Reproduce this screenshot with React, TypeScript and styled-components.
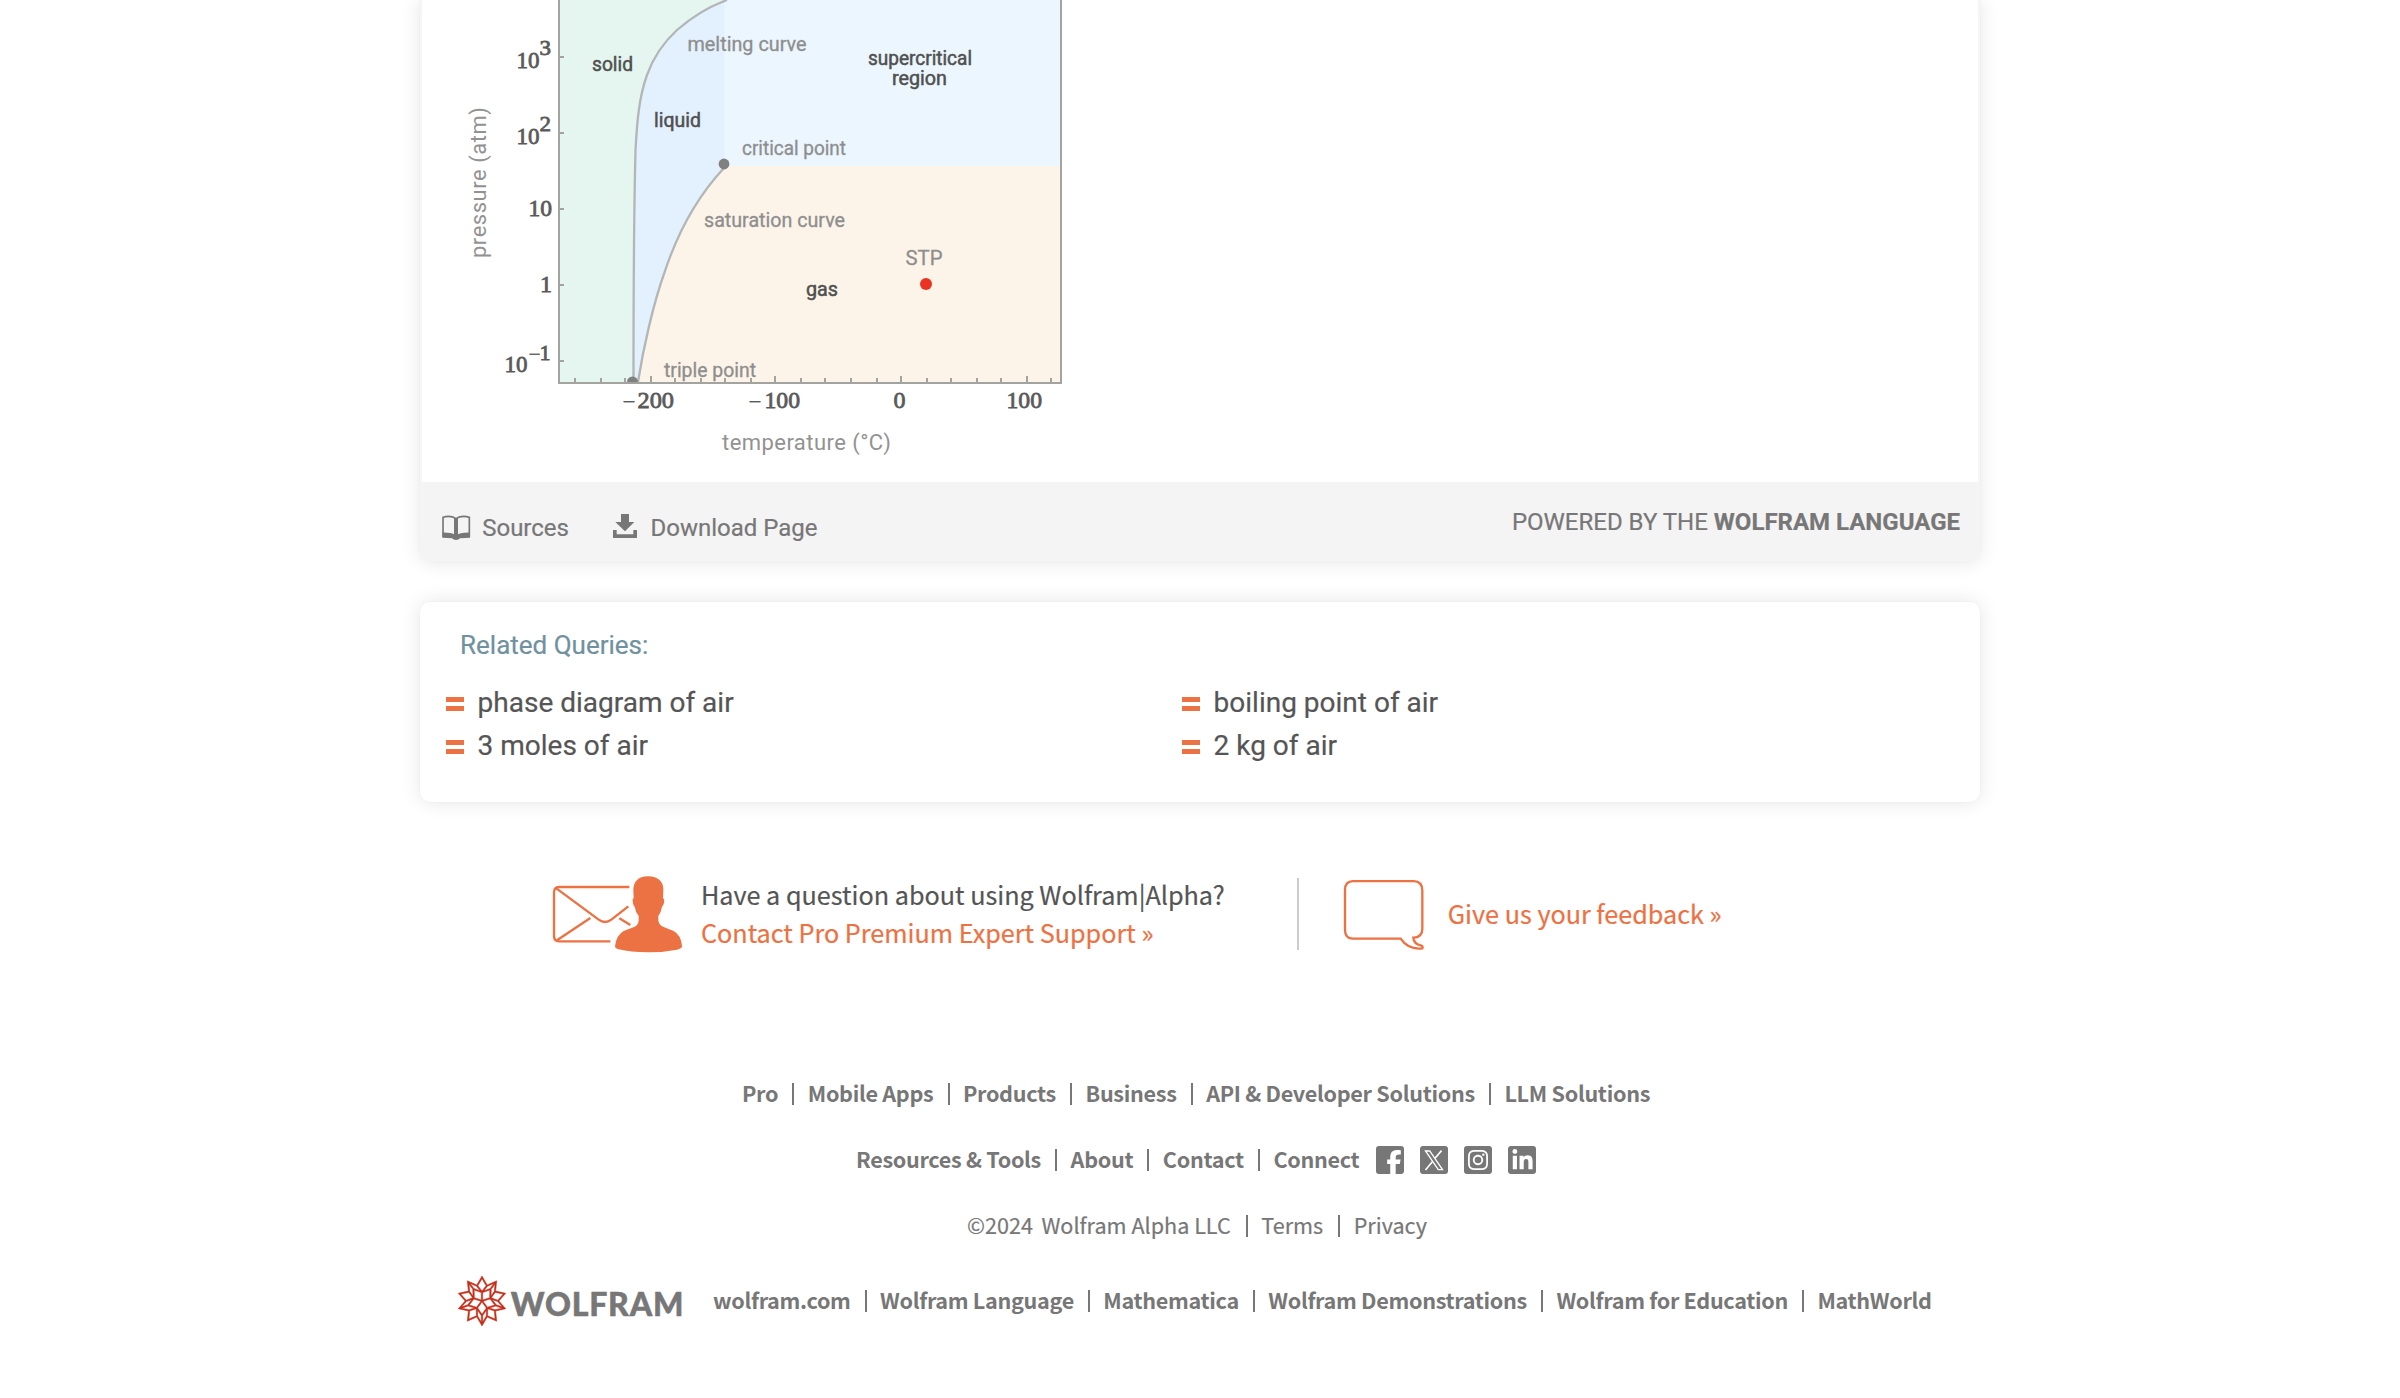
import React, { Fragment } from 'react';
import styled, { createGlobalStyle } from 'styled-components';
import { FaFacebookF, FaLinkedinIn } from 'react-icons/fa6';
import { SiWolfram, SiInstagram } from 'react-icons/si';

const sans = 'Roboto, "Liberation Sans", sans-serif';
const source = '"Noto Sans CJK SC", "Noto Sans", sans-serif';
const serif = '"Liberation Serif", serif';
const orange = '#ec7143';
const gray = '#777';

const GlobalStyle = createGlobalStyle`
  body {
    margin: 0;
    background: #fff;
    overflow: hidden;
  }
`;

const Page = styled.main`
  width: 1560px;
  height: 1398px;
  margin: 0 auto;
  display: flex;
  flex-direction: column;
  font-family: ${sans};
`;

const cardShadow = '0 0 20px rgba(0, 0, 0, 0.1), 0 0 2px rgba(0, 0, 0, 0.05)';

const ResultCard = styled.section`
  border-radius: 0 0 10px 10px;
  overflow: hidden;
  box-shadow: ${cardShadow};
`;

const PodBody = styled.div`
  height: 482px;
  background: #fff;
  border: solid #f5f5f5;
  border-width: 0 2px;
  box-sizing: border-box;
`;

const Chart = styled.svg`
  display: block;
`;

const CardFooter = styled.footer`
  height: 80px;
  padding: 0 20px 0 22px;
  display: flex;
  align-items: center;
  justify-content: space-between;
  background: #f4f4f4;
  color: ${gray};
  font-size: 24px;
  line-height: 28px;
  -webkit-text-stroke: 0.2px;
`;

const Actions = styled.div`
  display: flex;
  gap: 44px;
  padding-top: 12px;
`;

const Action = styled.a<{ $gap: number }>`
  display: flex;
  align-items: center;
  gap: ${(p) => p.$gap}px;

  svg {
    display: block;
    flex: none;
  }
`;

const DownloadIcon = styled.svg`
  margin-top: -4px;
`;

const RelatedCard = styled.section`
  height: 200px;
  margin-top: 40px;
  padding-top: 28px;
  box-sizing: border-box;
  background: #fff;
  border-radius: 10px;
  box-shadow: ${cardShadow};
  -webkit-text-stroke: 0.2px;
`;

const RelatedTitle = styled.h2`
  margin: 0 0 21px;
  padding-left: 40px;
  font-size: 26px;
  font-weight: 400;
  line-height: 30px;
  color: #6f91a0;
`;

const RelatedList = styled.ul`
  margin: 0;
  padding: 0 0 0 26px;
  list-style: none;
  display: grid;
  grid-template-columns: 736px 736px;
  grid-auto-rows: 43px;
`;

const RelatedItem = styled.li`
  display: flex;
  align-items: center;
  gap: 13.6px;
  font-size: 28px;
  line-height: 43px;
  color: #555;
`;

const Equals = styled.i`
  width: 18px;
  height: 4px;
  margin-top: 3px;
  border: solid ${orange};
  border-width: 5px 0;
`;

const Support = styled.section`
  height: 76px;
  margin-top: 73px;
  padding-left: 131.6px;
  display: flex;
  align-items: center;
  font-family: ${source};
  font-size: 25.2px;
  line-height: 38px;
  color: #555;
  -webkit-text-stroke: 0.2px;
`;

const SupportIcon = styled.svg<{ $shift: number }>`
  flex: none;
  margin-top: ${(p) => p.$shift}px;
`;

const SupportText = styled.div`
  width: 596px;
  margin-left: 18.7px;
`;

const SupportLink = styled.a`
  display: block;
  color: ${orange};
`;

const Divider = styled.span`
  width: 2px;
  height: 72px;
  margin: 2px 44px 0 0;
  background: #ccc;
`;

const Feedback = styled.div`
  display: flex;
  align-items: center;
  gap: 22.8px;
`;

const SiteFooter = styled.footer`
  margin-top: 127px;
  display: flex;
  flex-direction: column;
  font-family: ${source};
  font-size: 21.6px;
  line-height: 30px;
  color: ${gray};
`;

const LinkRow = styled.nav<{ $indent: number; $light?: boolean }>`
  height: 30px;
  margin-bottom: 36px;
  padding-left: ${(p) => p.$indent}px;
  display: flex;
  align-items: center;
  white-space: nowrap;
  font-weight: ${(p) => (p.$light ? 400 : 700)};
  letter-spacing: ${(p) => (p.$light ? 0 : -0.3)}px;
  -webkit-text-stroke: ${(p) => (p.$light ? 0.2 : 0)}px;
`;

const Pipe = styled.span<{ $before: number }>`
  width: 2px;
  height: 22px;
  margin: 2px 13.4px 0 ${(p) => p.$before}px;
  background: ${gray};
`;

const Copyright = styled.span`
  margin-right: 8.5px;
`;

const Socials = styled.div`
  display: flex;
  gap: 16px;
  margin: 2px 0 0 17px;
`;

const Social = styled.a<{ $align?: string }>`
  width: 28px;
  height: 28px;
  border-radius: 3px;
  background: ${gray};
  color: #fff;
  display: flex;
  align-items: ${(p) => p.$align || 'center'};
  justify-content: center;
`;

const FacebookGlyph = styled(FaFacebookF)`
  width: 16px;
  height: 24px;
  margin-left: 7px;
`;

const BrandRow = styled.div`
  height: 50px;
  padding-left: 37.2px;
  display: flex;
  align-items: center;
`;

const Spikey = styled(SiWolfram)`
  width: 50px;
  height: 50px;
  color: #c42c18;
  stroke: #c42c18;
  stroke-width: 0.25;
  overflow: visible;
`;

const Wordmark = styled.span`
  margin: 6px 28.9px 0 3.6px;
  font-family: Lato, sans-serif;
  font-size: 32px;
  font-weight: 900;
  letter-spacing: 0.8px;
  line-height: 40px;
  -webkit-text-stroke: 0.5px;
`;

const BrandLinks = styled.nav`
  margin-top: -2px;
  display: flex;
  align-items: center;
  white-space: nowrap;
  font-weight: 700;
  letter-spacing: -0.31px;
`;

const Links = ({ items, before = 14.2 }: { items: string[]; before?: number }) => (
  <>
    {items.map((item, i) => (
      <Fragment key={item}>
        {i > 0 && <Pipe $before={before} />}
        <a>{item}</a>
      </Fragment>
    ))}
  </>
);

const majorX = [651, 775, 901, 1027];
const minorX = [575, 601, 625, 675, 701, 725, 751, 801, 825, 851, 877, 927, 951, 977, 1001, 1051];
const majorY = [57, 133, 209, 285, 361];

type Label = { t: string; x: number; y: number; w: number; dark?: boolean };

const regionLabels: Label[] = [
  { t: 'solid', x: 592, y: 70.5, w: 41, dark: true },
  { t: 'liquid', x: 654, y: 126.5, w: 47, dark: true },
  { t: 'supercritical', x: 868, y: 64.5, w: 104, dark: true },
  { t: 'region', x: 892, y: 84.5, w: 55, dark: true },
  { t: 'gas', x: 806, y: 296, w: 32, dark: true },
  { t: 'melting curve', x: 687.5, y: 50.5, w: 119 },
  { t: 'critical point', x: 742, y: 154.5, w: 104 },
  { t: 'saturation curve', x: 704, y: 226.5, w: 141 },
  { t: 'STP', x: 905.5, y: 264.5, w: 37 },
  { t: 'triple point', x: 664, y: 376.5, w: 92 },
];

const tickLabels: (Label & { s?: number })[] = [
  { t: '10', x: 516.5, y: 68, w: 23 },
  { t: '3', x: 539.5, y: 55, w: 11.5, s: 22 },
  { t: '10', x: 516.5, y: 144, w: 23 },
  { t: '2', x: 539.5, y: 131, w: 11.5, s: 22 },
  { t: '10', x: 528.5, y: 216, w: 23.5 },
  { t: '1', x: 540, y: 292, w: 12 },
  { t: '10', x: 504.5, y: 372, w: 23 },
  { t: '−', x: 528.5, y: 361, w: 12, s: 21 },
  { t: '1', x: 539.5, y: 360, w: 11, s: 22 },
  { t: '−', x: 622.5, y: 409, w: 13, s: 22 },
  { t: '200', x: 637.5, y: 407.5, w: 36.5 },
  { t: '−', x: 748.5, y: 409, w: 13, s: 22 },
  { t: '100', x: 764.5, y: 407.5, w: 35.5 },
  { t: '0', x: 893.5, y: 407.5, w: 12 },
  { t: '100', x: 1006.5, y: 407.5, w: 35.5 },
];

const meltingCurve =
  'M727 0 C708 7 692 17 677 30 C664 42 653 58 647 75 C639 97 637 122 635.5 150 C634.5 190 633.5 260 633.5 382';
const saturationCurve = 'M724 168 C696 198 677 235 665 271 C653 304 643 350 638 382';

const PhaseDiagram = () => (
  <Chart width="700" height="482" viewBox="422 0 700 482">
    <rect x="559" y="0" width="502" height="383" fill="#e4f6ef" />
    <path d={`${meltingCurve} H725 V0 Z`} fill="#e3f1fe" />
    <rect x="724.3" y="0" width="336.7" height="166" fill="#ebf6ff" />
    <path d={`${saturationCurve} H1061 V166 H724 Z`} fill="#fdf4e9" />
    <g fill="none" stroke="#b3b6b6" strokeWidth="2.3">
      <path d={meltingCurve} />
      <path d={saturationCurve} />
    </g>
    <path d="M627 382 a5.5 5.5 0 0 1 11 0 Z" fill="#808080" />
    <g stroke="#a3a3a0" strokeWidth="2" fill="none">
      <path d="M559 0 V383 H1061 V0" />
      {majorX.map((x) => (
        <path key={x} d={`M${x} 376 V383`} />
      ))}
      {minorX.map((x) => (
        <path key={x} d={`M${x} 378 V383`} />
      ))}
      {majorY.map((y) => (
        <path key={y} d={`M559 ${y} H564`} />
      ))}
    </g>
    <circle cx="724" cy="164" r="5.4" fill="#808080" />
    <circle cx="926" cy="284" r="6" fill="#ea3323" />
    <g fontFamily={sans} fontSize="19.4">
      {regionLabels.map((l) => (
        <text
          key={l.t}
          x={l.x}
          y={l.y}
          textLength={l.w}
          lengthAdjust="spacingAndGlyphs"
          fill={l.dark ? '#505050' : '#8e8e8e'}
          stroke={l.dark ? '#505050' : '#8e8e8e'}
          strokeWidth={l.dark ? 0.5 : 0.3}
        >
          {l.t}
        </text>
      ))}
    </g>
    <g fontFamily={serif} fill="#5a5a5a" stroke="#5a5a5a" strokeWidth="0.8">
      {tickLabels.map((l) => (
        <text
          key={`${l.x}-${l.y}`}
          x={l.x}
          y={l.y}
          fontSize={l.s || 24}
          textLength={l.w}
          lengthAdjust="spacingAndGlyphs"
          strokeWidth={l.t === '−' ? 0.3 : undefined}
        >
          {l.t}
        </text>
      ))}
    </g>
    <g fontFamily={sans} fontSize="22" fill="#929292">
      <text x="722" y="449.5" textLength="169">
        temperature (°C)
      </text>
      <text transform="translate(486 258) rotate(-90)" textLength="151">
        pressure (atm)
      </text>
    </g>
  </Chart>
);

const BookIcon = () => (
  <svg width="28.7" height="25.3" viewBox="96 166 86 76" fill={gray}>
    <path d="M99 232 V173 Q121 166 138 177 Q155 166 178 173 V232" fill="none" stroke={gray} strokeWidth="5" />
    <path d="M132 176 H144 V226 H132 Z" />
    <path d="M97 219 Q122 218 132 224 H144 Q156 218 180 219 V234 L150 236 Q146 241 138 241 Q130 241 126 236 L97 234 Z" />
  </svg>
);

const ContactIcon = () => (
  <SupportIcon $shift={2} width="130.7" height="78" viewBox="65 75 392 234">
    <g fill="none" stroke={orange} strokeWidth="7">
      <path d="M297 111 H86 Q71 111 71 127 V258 Q71 274 86 274 H240" />
      <path d="M78 115 L205 209 Q224 223 243 209 L294 169" />
      <path d="M180 204 L80 271 M267 205 L300 225" />
    </g>
    <path
      fill={orange}
      d="M353 79 C385 79 400 97 399 120 L398 145 Q403 146 401 158 Q399 167 395 170 Q392 188 384 198 V212 Q387 225 398 230 L430 243 Q452 255 455 288 Q455 296 440 299 Q400 307 354 307 Q300 307 265 298 Q254 295 254 289 Q258 255 280 243 L313 230 Q323 225 325 212 V198 Q316 188 313 170 Q308 166 307 152 Q306 146 310 145 L309 120 C309 97 322 79 353 79 Z"
    />
  </SupportIcon>
);

const BubbleIcon = () => (
  <SupportIcon $shift={4} width="82" height="72" viewBox="68 87 246 216">
    <path
      d="M98 93.5 H280 Q306 94 306 122 V236 Q306 262 279 263 Q280 282 303 287 Q309 290 306 295 Q264 300 241 266 H98 Q74 266 74 240 V120 Q74 94 98 93.5 Z"
      fill="none"
      stroke={orange}
      strokeWidth="7"
    />
  </SupportIcon>
);

const XGlyph = () => (
  <svg width="20" height="21" viewBox="612 267 60 64" fill="none" stroke="#fff">
    <path d="M616 270 H629 L668 327 H655 Z" strokeWidth="4" />
    <path d="M665 269 L645 292 M637 303 L616 328" strokeWidth="5" />
  </svg>
);

export default function App() {
  return (
    <>
      <GlobalStyle />
      <Page>
        <ResultCard>
          <PodBody>
            <PhaseDiagram />
          </PodBody>
          <CardFooter>
            <Actions>
              <Action $gap={11.5}>
                <BookIcon />
                Sources
              </Action>
              <Action $gap={13.5}>
                <DownloadIcon width="24" height="24" viewBox="609 162 72 72" fill={gray}>
                  <path d="M633 162 H657 V186 H673 L645 214 L616 186 H633 Z M609 210 H620 V223 H670 V210 H681 V234 H609 Z" />
                </DownloadIcon>
                Download Page
              </Action>
            </Actions>
            <span>
              POWERED BY THE <b>WOLFRAM LANGUAGE</b>
            </span>
          </CardFooter>
        </ResultCard>

        <RelatedCard>
          <RelatedTitle>Related Queries:</RelatedTitle>
          <RelatedList>
            {['phase diagram of air', 'boiling point of air', '3 moles of air', '2 kg of air'].map((q) => (
              <RelatedItem key={q}>
                <Equals />
                {q}
              </RelatedItem>
            ))}
          </RelatedList>
        </RelatedCard>

        <Support>
          <ContactIcon />
          <SupportText>
            Have a question about using Wolfram|Alpha?
            <SupportLink>Contact Pro Premium Expert Support »</SupportLink>
          </SupportText>
          <Divider />
          <Feedback>
            <BubbleIcon />
            <SupportLink>Give us your feedback »</SupportLink>
          </Feedback>
        </Support>

        <SiteFooter>
          <LinkRow $indent={322}>
            <Links
              items={['Pro', 'Mobile Apps', 'Products', 'Business', 'API & Developer Solutions', 'LLM Solutions']}
            />
          </LinkRow>
          <LinkRow $indent={436}>
            <Links items={['Resources & Tools', 'About', 'Contact', 'Connect']} />
            <Socials>
              <Social $align="flex-end">
                <FacebookGlyph />
              </Social>
              <Social>
                <XGlyph />
              </Social>
              <Social>
                <SiInstagram size={20} />
              </Social>
              <Social>
                <FaLinkedinIn size={23} />
              </Social>
            </Socials>
          </LinkRow>
          <LinkRow $indent={547} $light>
            <Copyright>©2024</Copyright>
            <Links items={['Wolfram Alpha LLC', 'Terms', 'Privacy']} before={15.2} />
          </LinkRow>
          <BrandRow>
            <Spikey />
            <Wordmark>WOLFRAM</Wordmark>
            <BrandLinks>
              <Links
                items={[
                  'wolfram.com',
                  'Wolfram Language',
                  'Mathematica',
                  'Wolfram Demonstrations',
                  'Wolfram for Education',
                  'MathWorld',
                ]}
                before={14}
              />
            </BrandLinks>
          </BrandRow>
        </SiteFooter>
      </Page>
    </>
  );
}
